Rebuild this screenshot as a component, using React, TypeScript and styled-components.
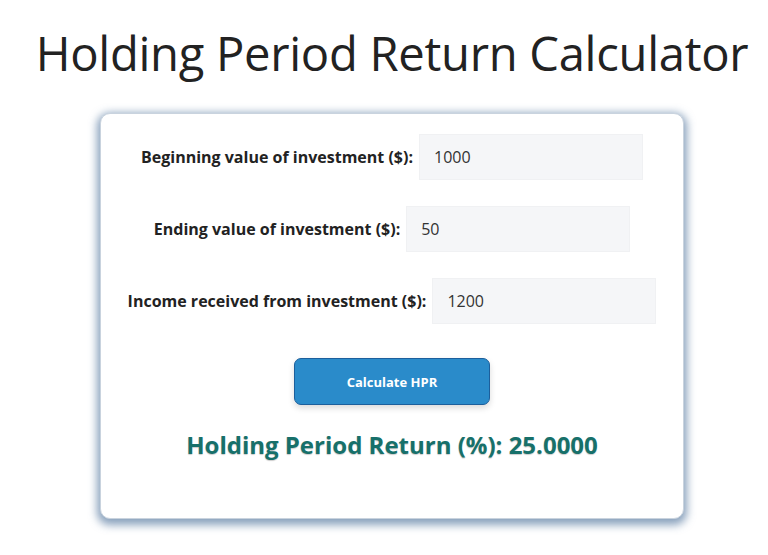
import styled, { createGlobalStyle } from 'styled-components';

const GlobalStyle = createGlobalStyle`
  html, body {
    margin: 0;
    padding: 0;
    background: #ffffff;
  }
  body {
    font-family: 'Open Sans', 'Noto Sans', sans-serif;
    color: #222;
  }
`;

const fields = [
  { label: 'Beginning value of investment ($):', value: '1000' },
  { label: 'Ending value of investment ($):', value: '50' },
  { label: 'Income received from investment ($):', value: '1200' },
];

function App() {
  return (
    <Page>
      <GlobalStyle />
      <Title>Holding Period Return Calculator</Title>
      <Card>
        <Form>
          {fields.map((field) => (
            <Row key={field.label}>
              <Label>{field.label}</Label>
              <Input type="text" defaultValue={field.value} />
            </Row>
          ))}
        </Form>
        <Button type="button">Calculate HPR</Button>
        <Result>Holding Period Return (%): 25.0000</Result>
      </Card>
    </Page>
  );
}

export default App;

const Page = styled.div`
  width: 768px;
  height: 555px;
  display: flex;
  flex-direction: column;
  align-items: center;
  overflow: hidden;
`;

const Title = styled.h1`
  margin: 22px 0 0 16px;
  font-size: 47.2px;
  font-weight: 400;
  line-height: 62px;
  color: #222;
  letter-spacing: -0.3px;
`;

const Card = styled.div`
  box-sizing: border-box;
  width: 584px;
  height: 406px;
  margin-top: 29px;
  margin-left: 16px;
  padding: 20px 0 0;
  background: #fff;
  border: 1px solid #c9d3de;
  border-radius: 10px;
  box-shadow: 0 3px 8px 3px rgba(60, 100, 145, 0.6);
  display: flex;
  flex-direction: column;
  align-items: center;
`;

const Form = styled.div`
  display: flex;
  flex-direction: column;
  gap: 26px;
`;

const Row = styled.div`
  display: flex;
  align-items: center;
  justify-content: center;
  gap: 6px;
`;

const Label = styled.label`
  font-size: 16px;
  font-weight: 700;
  color: #222;
`;

const Input = styled.input`
  box-sizing: border-box;
  width: 224px;
  height: 46px;
  padding: 0 14px;
  border: 1px solid #f0f1f3;
  background: #f5f6f8;
  font-family: 'Open Sans', 'Noto Sans', sans-serif;
  font-size: 16px;
  color: #333;
  outline: none;
`;

const Button = styled.button`
  margin-top: 34px;
  width: 196px;
  height: 47px;
  background: #2a8bca;
  border: 1.5px solid #1c5f9c;
  border-radius: 7px;
  color: #fff;
  font-family: 'Open Sans', 'Noto Sans', sans-serif;
  font-size: 13px;
  font-weight: 700;
  box-shadow: 0 3px 6px rgba(0, 0, 0, 0.15);
  cursor: pointer;
`;

const Result = styled.div`
  margin-top: 23px;
  font-size: 24px;
  font-weight: 700;
  color: #17706a;
  text-shadow: 0 1px 1px rgba(0, 0, 0, 0.2);
`;
